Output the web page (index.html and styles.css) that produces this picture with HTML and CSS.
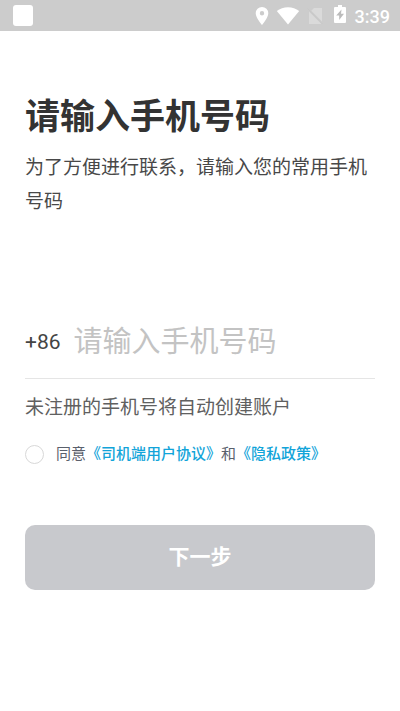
FILE: index.html
```html
<!DOCTYPE html>
<html lang="zh-CN">
<head>
<meta charset="utf-8">
<meta name="viewport" content="width=device-width, initial-scale=1">
<title>请输入手机号码</title>
<link rel="stylesheet" href="styles.css">
</head>
<body>
<header class="status">
  <span class="status-app"></span>
  <div class="status-icons">
    <svg width="14" height="20" viewBox="0 0 14 20" fill="#fff"><path fill-rule="evenodd" d="M7 1a6.300 6.300 0 0 0-6.300 6.300C.7 12 7 19 7 19s6.300-7 6.300-11.700A6.300 6.300 0 0 0 7 1zm0 4a2.200 2.200 0 1 1 0 4.400A2.200 2.200 0 0 1 7 5z"/></svg>
    <svg width="24" height="20" viewBox="0 0 24 20" fill="#fff"><path d="M12 18.500.8 5C4 2.500 7.800 1.200 12 1.200s8 1.300 11.200 3.800z"/></svg>
    <svg width="18" height="20" viewBox="0 0 18 20"><path fill="#dadada" d="M7 2h8v13.500L4.300 4.700zM2 5.500 14.500 18H2z"/><path d="m.5 2.500 15 15.500" stroke="#c8c8c8" stroke-width="1"/></svg>
    <svg class="battery" width="12" height="20" viewBox="0 0 12 20"><path fill="#fff" d="M4 1h4v2h3q1 0 1 1v14q0 1-1 1H1q-1 0-1-1V4q0-1 1-1h3z"/><path fill="#bbb" d="M7.500 5.500 2.200 11.500h3v4.500L10 9.800H7z"/></svg>
    <span class="clock">3:39</span>
  </div>
</header>
<main class="page">
  <h1>请输入手机号码</h1>
  <p class="intro">为了方便进行联系，请输入您的常用手机号码</p>
  <form>
    <div class="phone">
      <label for="phone">+86</label>
      <input id="phone" type="tel" placeholder="请输入手机号码">
    </div>
    <p class="note">未注册的手机号将自动创建账户</p>
    <div class="agree">
      <input id="agree" type="checkbox">
      <div class="terms"><label for="agree">同意</label><a href="#">《司机端用户协议》</a>和<a href="#">《隐私政策》</a></div>
    </div>
    <button type="button">下一步</button>
  </form>
</main>
</body>
</html>
```
FILE: styles.css
```css
* {
  box-sizing: border-box;
}

body {
  margin: 0;
  background: #fff;
  color: #333;
  font-family: Roboto, "Noto Sans CJK SC", sans-serif;
}

.status {
  display: flex;
  align-items: center;
  justify-content: space-between;
  height: 31px;
  padding: 0 10px 0 13px;
  background: #ccc;
}

.status-app {
  width: 20px;
  height: 21px;
  border-radius: 3px;
  background: #fff;
}

.status-icons {
  display: flex;
  align-items: center;
  gap: 7px;
}

.status-icons svg {
  display: block;
}

.status-icons .battery {
  margin: 0 2px 4px;
}

.clock {
  padding-top: 2px;
  color: #fff;
  font-size: 18px;
  font-weight: 500;
  line-height: 20px;
}

.page {
  padding: 62px 25px 0;
}

h1 {
  margin: 0;
  font-size: 35px;
  font-weight: 700;
  line-height: 50px;
}

.intro {
  margin: 8px 0 0;
  color: #484848;
  font-size: 19px;
  line-height: 34px;
}

.phone {
  display: flex;
  align-items: center;
  gap: 13px;
  height: 74px;
  margin-top: 86px;
  border-bottom: 1px solid #e5e5e5;
}

.phone label {
  color: #444;
  font-size: 21px;
}

.phone input {
  flex: 1;
  min-width: 0;
  height: 44px;
  padding: 0;
  border: 0;
  outline: 0;
  background: none;
  color: #333;
  font: inherit;
  font-size: 29px;
}

.phone input::placeholder {
  color: #c3c3c3;
}

.note {
  margin: 15px 0 0;
  color: #606060;
  font-size: 19px;
  line-height: 28px;
}

.agree {
  display: flex;
  align-items: center;
  gap: 12px;
  margin-top: 20px;
}

.agree input {
  flex: none;
  width: 19px;
  height: 19px;
  margin: 0;
  border: 1px solid #d8d8d8;
  border-radius: 50%;
  background: #fff;
  appearance: none;
}

.agree input:checked {
  background: #12a4d9;
}

.terms {
  color: #5a606c;
  font-size: 15px;
  line-height: 24px;
}

.terms a {
  color: #12a4d9;
  font-weight: 500;
  text-decoration: none;
}

button {
  display: block;
  width: 100%;
  height: 65px;
  margin-top: 59px;
  padding: 0 0 6px;
  border: 0;
  border-radius: 10px;
  background: #c8c9cd;
  color: #fff;
  font: inherit;
  font-size: 21px;
  font-weight: 700;
}
```
